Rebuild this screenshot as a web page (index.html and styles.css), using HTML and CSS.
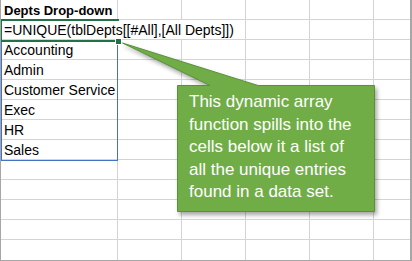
FILE: index.html
```html
<!DOCTYPE html>
<html lang="en">
<head>
    <meta charset="UTF-8">
    <meta name="viewport" content="width=device-width, initial-scale=1.0">
    <title>Depts Drop-down</title>
    <link rel="stylesheet" href="styles.css">
</head>
<body>

    <div class="sheet">
        <!-- row 1 -->
        <div class="cell head">Depts Drop-down</div>
        <div class="cell"></div><div class="cell"></div><div class="cell"></div><div class="cell"></div><div class="cell"></div>

        <!-- row 2: the formula overflows into B and C -->
        <div class="cell formula">=UNIQUE(tblDepts[[#All],[All Depts]])</div>
        <div class="cell"></div><div class="cell"></div><div class="cell"></div>

        <!-- spilled values -->
        <div class="cell">Accounting</div>
        <div class="cell"></div><div class="cell"></div><div class="cell"></div><div class="cell"></div><div class="cell"></div>
        <div class="cell">Admin</div>
        <div class="cell"></div><div class="cell"></div><div class="cell"></div><div class="cell"></div><div class="cell"></div>
        <div class="cell">Customer Service</div>
        <div class="cell"></div><div class="cell"></div><div class="cell"></div><div class="cell"></div><div class="cell"></div>
        <div class="cell">Exec</div>
        <div class="cell"></div><div class="cell"></div><div class="cell"></div><div class="cell"></div><div class="cell"></div>
        <div class="cell">HR</div>
        <div class="cell"></div><div class="cell"></div><div class="cell"></div><div class="cell"></div><div class="cell"></div>
        <div class="cell">Sales</div>
        <div class="cell"></div><div class="cell"></div><div class="cell"></div><div class="cell"></div><div class="cell"></div>

        <!-- empty rows -->
        <div class="cell"></div><div class="cell"></div><div class="cell"></div><div class="cell"></div><div class="cell"></div><div class="cell"></div>
        <div class="cell"></div><div class="cell"></div><div class="cell"></div><div class="cell"></div><div class="cell"></div><div class="cell"></div>
        <div class="cell"></div><div class="cell"></div><div class="cell"></div><div class="cell"></div><div class="cell"></div><div class="cell"></div>
        <div class="cell"></div><div class="cell"></div><div class="cell"></div><div class="cell"></div><div class="cell"></div><div class="cell"></div>
        <div class="cell"></div><div class="cell"></div><div class="cell"></div><div class="cell"></div><div class="cell"></div><div class="cell"></div>

        <!-- overlays -->
        <div class="spill"></div>
        <div class="active"></div>
        <div class="fill-handle"></div>

        <svg class="callout-shape" width="412" height="261" viewBox="0 0 412 261">
            <path d="M122.5 43 L210 85.5 L177.5 85.5 L177.5 211.5 L374.5 211.5 L374.5 85.5 L258 85.5 Z"
                  fill="#70ad47" stroke="#5b8f3a" stroke-width="1"/>
        </svg>
        <div class="callout">
            This dynamic array<br>
            function spills into the<br>
            cells below it a list of<br>
            all the unique entries<br>
            found in a data set.
        </div>
    </div>

</body>
</html>
```

FILE: styles.css
```css
body {
    margin: 0;
    padding: 0;
    background-color: #fff;
    font-family: "Liberation Sans", Arial, sans-serif;
}

.sheet {
    position: relative;
    width: 412px;
    height: 261px;
    box-sizing: border-box;
    border-left: 1px solid #a6a6a6;
    border-right: 2px solid #a6a6a6;
    border-bottom: 1px solid #a6a6a6;
    background-color: #d4d4d4; /* gridlines show through the gaps */
    display: grid;
    grid-template-columns: 116px 63px 63px 63px 63px 1fr;
    grid-template-rows: repeat(12, 19px) 20px;
    gap: 1px;
    overflow: hidden;
}

.cell {
    background-color: #fff;
    padding: 0 3px;
    font-size: 14px;
    line-height: 17px;
    color: #000;
    white-space: nowrap;
    display: flex;
    align-items: flex-end;
}

.cell.head {
    font-size: 13px;
    font-weight: bold;
}

.cell.formula {
    grid-column: span 3;
}

/* blue border round the spill range */
.spill {
    position: absolute;
    left: 0;
    top: 40px;
    width: 117px;
    height: 121px;
    box-sizing: border-box;
    border: 1px solid #4472c4;
}

/* the selected cell */
.active {
    position: absolute;
    left: -1px;
    top: 19px;
    width: 119px;
    height: 23px;
    box-sizing: border-box;
    border: 2px solid #217346;
    border-right: none;
}

.fill-handle {
    position: absolute;
    left: 114px;
    top: 38px;
    width: 5px;
    height: 5px;
    background-color: #217346;
    border: 1px solid #fff;
}

.callout-shape {
    position: absolute;
    left: -1px;
    top: 0;
    filter: drop-shadow(2px 3px 2px rgba(0, 0, 0, 0.35));
}

.callout {
    position: absolute;
    left: 177px;
    top: 85px;
    width: 198px;
    height: 127px;
    box-sizing: border-box;
    padding: 6px 0 0 11px;
    color: #fff;
    font-size: 17px;
    line-height: 22.5px;
    white-space: nowrap;
}
```
